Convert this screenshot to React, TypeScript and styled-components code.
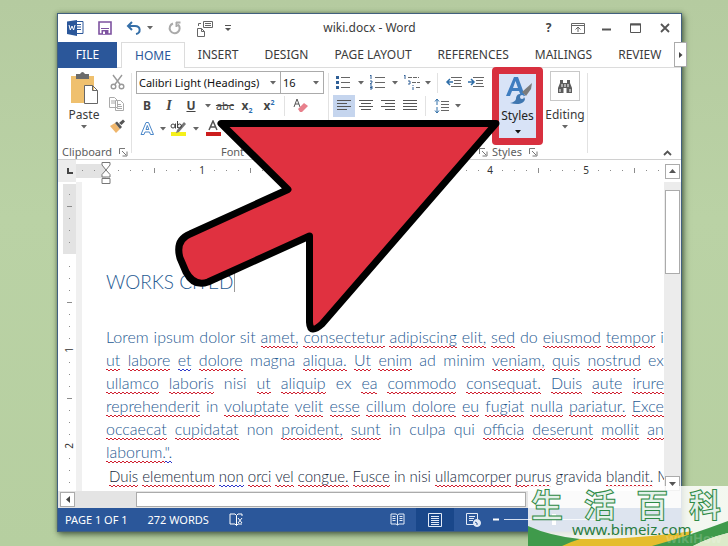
import React from 'react';
import styled, { createGlobalStyle, css } from 'styled-components';

const GlobalStyle = createGlobalStyle`
  *, *::before, *::after { box-sizing: border-box; }
  body { margin: 0; background: #b8d0a3; color: #3b3b3b; font: 12px/16px "Noto Sans", "Open Sans", sans-serif; }
  button, select, input { font: inherit; color: inherit; margin: 0; padding: 0; border: 0; background: none; }
  h1, p { margin: 0; font-weight: 400; }
`;

const Desktop = styled.div`
  position: relative;
  display: flex;
  height: 100vh;
  padding: 13px 46px 14px 57px;
  overflow: hidden;
  background: linear-gradient(#b5cba0, #bad2a5 40%, #b6cfa0);
`;

const Window = styled.main`
  flex: 1;
  min-width: 0;
  display: flex;
  flex-direction: column;
  background: #fff;
  border: 1px solid #41607f;
  box-shadow: 2px 3px 6px rgba(40, 60, 40, 0.6), 0 0 4px rgba(40, 60, 40, 0.5);
`;

const TitleBar = styled.header`
  display: grid;
  grid-template-columns: 1fr auto 1fr;
  align-items: center;
  height: 28px;
`;

const QuickAccess = styled.div`
  display: flex;
  align-items: center;
  gap: 8px;
  padding-left: 8px;
`;

const Title = styled.h1`
  font-size: 12px;
  line-height: 16px;
`;

const WindowControls = styled.div`
  display: flex;
  justify-content: flex-end;
  padding-right: 2px;
`;

const IconButton = styled.button<{ $w?: number; $on?: boolean }>`
  display: flex;
  align-items: center;
  justify-content: center;
  flex: none;
  width: ${p => p.$w ?? 22}px;
  height: 22px;
  background: ${p => (p.$on ? '#c5d5ee' : 'transparent')};
`;

const TabBar = styled.nav`
  display: flex;
  height: 26px;
  border-bottom: 1px solid #dcdcdc;
`;

const Tab = styled.button<{ $kind?: 'file' | 'active' }>`
  flex: none;
  height: 26px;
  padding: 0 13px;
  font-size: 12px;
  white-space: nowrap;
  ${p => p.$kind === 'file' && css`
    width: 59px;
    margin-right: 4px;
    padding: 0;
    color: #fff;
    background: #2b579a;
  `}
  ${p => p.$kind === 'active' && css`
    padding: 0 13px;
    color: #2b579a;
    background: #fff;
    border: 1px solid #dcdcdc;
    border-bottom: 0;
  `}
`;

const TabScroll = styled.button`
  display: flex;
  flex: none;
  align-items: center;
  justify-content: center;
  width: 13px;
  height: 25px;
  margin-left: auto;
  border: 1px solid #ababab;
  background: #fff;
`;

const Ribbon = styled.div`
  display: grid;
  grid-template-columns: 74px 197px 163px 50px 46px 1fr;
  height: 92px;
  border-bottom: 1px solid #d0d0d0;
`;

const Group = styled.section<{ $line?: boolean; $pad?: number }>`
  position: relative;
  display: flex;
  flex-direction: column;
  justify-content: space-between;
  min-width: 0;
  padding: 3px 0 0 ${p => p.$pad ?? 4}px;
  ${p => p.$line && css`
    background: linear-gradient(#e2e2e2, #e2e2e2) right 5px / 1px 80px no-repeat;
  `}
`;

const Row = styled.div`
  display: flex;
  align-items: center;
  height: 23px;
`;

const Divider = styled.span`
  flex: none;
  width: 1px;
  height: 20px;
  margin: 0 5px 0 4px;
  background: #e2e2e2;
`;

const GroupFooter = styled.div<{ $center?: boolean }>`
  display: flex;
  align-items: center;
  justify-content: ${p => (p.$center ? 'center' : 'space-between')};
  height: 14px;
  margin-bottom: 5px;
  font-size: 11px;
  color: #5c5c5c;
`;

const ClipboardBody = styled.div`
  display: grid;
  grid-template-columns: 44px 22px;
  height: 66px;
`;

const BigButton = styled.button`
  display: flex;
  flex-direction: column;
  align-items: center;
  gap: 2px;
  line-height: 16px;
`;

const SelectBox = styled.label<{ $w: number }>`
  display: flex;
  align-items: center;
  width: ${p => p.$w}px;
  height: 23px;
  padding-right: 4px;
  border: 1px solid #ababab;
  & + & { border-left: 0; }
  select {
    flex: 1;
    min-width: 0;
    height: 20px;
    padding-left: 2px;
    appearance: none;
    outline: none;
    font-size: 11px;
    color: #111;
  }
`;

const Letter = styled.span<{ $style?: 'b' | 'i' | 'u' | 's' }>`
  font-size: 12px;
  font-weight: 700;
  color: #444;
  ${p => p.$style === 'i' && css`font-family: "Liberation Serif", serif; font-style: italic; font-size: 14px;`}
  ${p => p.$style === 'u' && css`text-decoration: underline;`}
  ${p => p.$style === 's' && css`text-decoration: line-through; font-weight: 400; font-size: 11px;`}
  sub, sup { font-size: 7px; line-height: 0; color: #2b6cb0; }
`;

const HighlightFrame = styled.div`
  width: 51px;
  margin: -4px 0 0 0;
  border: 7px solid #d8303f;
  border-radius: 4px;
  background: #d8e3f7;
`;

const StylesButton = styled.button`
  display: flex;
  flex-direction: column;
  align-items: center;
  width: 37px;
  height: 64px;
  color: #222;
  white-space: nowrap;
`;

const BinocularBox = styled.span`
  display: flex;
  align-items: center;
  justify-content: center;
  width: 30px;
  height: 30px;
  margin-bottom: 4px;
  border: 1px solid #c8c8c8;
`;

const RibbonEnd = styled.div`
  display: flex;
  align-items: flex-end;
  justify-content: flex-end;
`;

const HRulerRow = styled.div`
  display: flex;
  align-items: center;
  height: 22px;
  overflow: hidden;
`;

const TabSelector = styled.button`
  flex: none;
  display: flex;
  align-items: center;
  justify-content: center;
  width: 18px;
  height: 22px;
  padding-left: 6px;
  background: #ececec;
`;

const HRuler = styled.div`
  flex: 1;
  display: flex;
  min-width: 0;
  height: 14px;
  overflow: hidden;
  background: linear-gradient(90deg, #e3e3e3 30px, #fff 30px);
`;

const Mark = styled.span`
  flex: none;
  display: flex;
  align-items: center;
  justify-content: center;
  width: 12px;
  height: 12px;
  font-size: 10px;
  line-height: 12px;
  color: #333;
`;

const Tick = styled.i<{ $long?: boolean; $vertical?: boolean }>`
  width: ${p => (p.$long && p.$vertical ? 5 : 1)}px;
  height: ${p => (p.$long && !p.$vertical ? 5 : 1)}px;
  background: #8c8c8c;
`;

const VNumber = styled.span`
  writing-mode: vertical-rl;
  transform: rotate(180deg);
`;

const IndentMarker = styled.svg`
  position: absolute;
  left: 101px;
  top: 161px;
`;

const Workspace = styled.div`
  flex: 1;
  display: flex;
  min-height: 0;
`;

const VRuler = styled.div`
  flex: none;
  width: 13px;
  margin: 2px 0 0 5px;
  padding-top: 4px;
  overflow: hidden;
  background: linear-gradient(#e3e3e3 70px, #fff 70px);
`;

const Gutter = styled.div`
  flex: none;
  width: 6px;
  background: #f0f0f0;
`;

const Page = styled.article`
  flex: 1;
  min-width: 0;
  padding: 89px 0 0 24px;
  overflow: hidden;
  font-family: Lato, sans-serif;
  color: #1f5a92;
`;

const Heading = styled.p`
  display: flex;
  align-items: center;
  height: 22px;
  margin-bottom: 32px;
  font-size: 19px;
  font-weight: 300;
  line-height: 22px;
  &::after { content: ''; width: 1px; height: 20px; margin-left: 1px; background: #999; }
`;

const TextLine = styled.p<{ $fill?: boolean; $dark?: boolean }>`
  height: 23px;
  font-size: 16px;
  font-weight: 300;
  line-height: 23px;
  overflow: hidden;
  white-space: nowrap;
  ${p => p.$fill && css`text-align: justify; text-align-last: justify;`}
  ${p => p.$dark && css`margin-top: 2px; padding-left: 3px; color: #14263a; font-size: 15px;`}
`;

const squiggle = (colour: string) =>
  `url("data:image/svg+xml,%3Csvg xmlns='http://www.w3.org/2000/svg' width='4' height='3'%3E%3Cpath d='M-1 3L1 1 3 3 5 1' fill='none' stroke='%23${colour}'/%3E%3C/svg%3E")`;

const Misspelt = styled.span<{ $blue?: boolean }>`
  padding-bottom: 2px;
  background: ${p => squiggle(p.$blue ? '3038c8' : 'd02030')} left bottom repeat-x;
`;

const VScroll = styled.div`
  flex: none;
  display: flex;
  flex-direction: column;
  width: 17px;
  padding: 0 1px;
  background: #ececec;
`;

const ScrollButton = styled.button`
  flex: none;
  display: flex;
  align-items: center;
  justify-content: center;
  width: 15px;
  height: 15px;
  border: 1px solid #ababab;
  background: #fff;
`;

const RulerEnd = styled.div`
  flex: none;
  width: 16px;
`;

const VThumb = styled.div`
  height: 84px;
  margin: 8px 0 auto;
  border: 1px solid #ababab;
  background: #fff;
`;

const HScroll = styled.div`
  display: flex;
  align-items: center;
  height: 17px;
  padding: 0 2px;
  background: #e4e4e4;
`;

const HThumb = styled.div`
  width: 63%;
  height: 15px;
  margin-left: 61px;
  border: 1px solid #ababab;
  background: #fff;
`;

const StatusBar = styled.footer`
  display: flex;
  align-items: center;
  height: 23px;
  padding-left: 7px;
  color: #fff;
  background: #2b579a;
  font-size: 11px;
  white-space: nowrap;
`;

const StatusItem = styled.span`
  margin-right: 20px;
`;

const ViewButton = styled.button<{ $on?: boolean }>`
  display: flex;
  align-items: center;
  justify-content: center;
  width: 38px;
  height: 23px;
  background: ${p => (p.$on ? '#19478a' : 'transparent')};
`;

const Views = styled.div`
  display: flex;
  align-items: center;
  margin-left: auto;
  padding-right: 77px;
`;

const Zoom = styled.input`
  appearance: none;
  width: 100px;
  height: 1px;
  margin-left: 4px;
  background: #d5dff0;
  &::-webkit-slider-thumb { appearance: none; width: 4px; height: 11px; background: #fff; }
`;

const Pointer = styled.svg`
  position: absolute;
  left: 170px;
  top: 115px;
  pointer-events: none;
`;

const Watermark = styled.aside`
  position: absolute;
  right: 0;
  bottom: 0;
  width: 200px;
  height: 60px;
  overflow: hidden;
  color: #2e8a45;
  background: rgba(255, 255, 255, 0.84);
`;

const WatermarkArt = styled.svg`
  position: absolute;
  left: 0;
  bottom: 0;
`;

const WatermarkName = styled.div`
  position: relative;
  display: flex;
  justify-content: space-between;
  padding: 0 7px 0 3px;
  height: 34px;
  font: 700 32px/34px "Noto Sans CJK SC", sans-serif;
  color: #e4f1ea;
  -webkit-text-stroke: 1px #2e8a45;
`;

const WatermarkLink = styled.a`
  position: relative;
  display: block;
  padding-left: 44px;
  font: 15px/18px "Noto Sans", sans-serif;
  color: #2a7d3f;
  text-decoration: none;
`;

const Signature = styled.span`
  position: absolute;
  right: 6px;
  bottom: 0;
  font: 700 13px/16px "Noto Sans", sans-serif;
  color: rgba(255, 255, 255, 0.2);
`;

const Caret = () => (
  <svg width="6" height="4" viewBox="0 0 6 4" aria-hidden="true"><path d="M0 0h6L3 3.5z" fill="#666" /></svg>
);

const CaretButton = ({ w = 12, label }: { w?: number; label: string }) => (
  <IconButton $w={w} aria-label={label}><Caret /></IconButton>
);

const Launcher = () => (
  <IconButton $w={17} aria-label="More options">
    <svg width="9" height="9" viewBox="0 0 9 9" fill="none" stroke="#777"><path d="M.5 6V.5H6M3 3l4 4M8 3.5V8H3.5" /></svg>
  </IconButton>
);

const Lines = ({ rows }: { rows: [number, number][] }) => (
  <svg width="16" height="14" viewBox="0 0 16 14" stroke="#555" aria-hidden="true">
    {rows.map(([a, b], i) => <path key={i} d={`M${a} ${1.5 + i * 3}H${b}`} />)}
  </svg>
);

const ListIcon = ({ kind }: { kind: 'dots' | 'numbers' | 'levels' }) => (
  <svg width="18" height="17" viewBox="0 0 18 17" aria-hidden="true">
    {kind === 'dots' && <><path d="M6 3.5h9M6 8.5h9M6 13.5h9" stroke="#666" /><path d="M1 2h3v3H1zM1 7h3v3H1zM1 12h3v3H1z" fill="#2f5f96" /></>}
    {kind === 'numbers' && <><path d="M6 3.5h10M6 8.5h10M6 13.5h10" stroke="#666" /><path d="M1 2l1-1v4M1 7h2v1.500L1 10h2M1 12h2v3H1M1 13.500h2" stroke="#2f5f96" fill="none" /></>}
    {kind === 'levels' && <><path d="M5 3.500h11M9 8.500h8M13 13.500h4" stroke="#666" strokeDasharray="4 1" /><path d="M1 2l1-1v4M5 7h2v3H5M10 11v1M10 13v3" stroke="#2f5f96" fill="none" /></>}
  </svg>
);

const IndentIcon = ({ out }: { out?: boolean }) => (
  <svg width="18" height="14" viewBox="0 0 18 14" fill="none" aria-hidden="true">
    <path d="M6 1.500h11M9 4.500h7M9 7.500h7M6 10.500h11" stroke="#666" />
    <path d={out ? 'M8 6H2M5 3L2 6l3 3' : 'M1 6h6M4 3l3 3-3 3'} stroke="#2f6ea8" strokeWidth="1.500" />
  </svg>
);

const spans = (text: string) => text.split(' ').map((word, i) => {
  const mark = word[0];
  const flagged = mark === '*' || mark === '+';
  return (
    <React.Fragment key={i}>
      {i > 0 && ' '}
      {flagged ? <Misspelt $blue={mark === '+'}>{word.slice(1)}</Misspelt> : word}
    </React.Fragment>
  );
});

const paragraph = [
  'Lorem ipsum dolor sit *amet, *consectetur *adipiscing *elit, *sed do *eiusmod *tempor i',
  '*ut *labore +et *dolore magna *aliqua. *Ut *enim ad minim *veniam, *quis *nostrud ex',
  '*ullamco *laboris nisi *ut *aliquip ex *ea *commodo *consequat. *Duis *aute *irure',
  '*reprehenderit in *voluptate *velit *esse *cillum *dolore *eu *fugiat *nulla *pariatur. *Exce',
  '*occaecat *cupidatat non *proident, *sunt in culpa qui *officia *deserunt *mollit *an',
];

const marks = (from: number, to: number, vertical?: boolean) =>
  Array.from({ length: to - from + 1 }, (_, i) => from + i).map(k => (
    <Mark key={k}>
      {k === 0 ? null : k % 8 === 0
        ? (vertical ? <VNumber>{k / 8}</VNumber> : k / 8)
        : <Tick $long={k % 4 === 0} $vertical={vertical} />}
    </Mark>
  ));

export default function App() {
  return (
    <Desktop>
      <GlobalStyle />
      <Window>
        <TitleBar>
          <QuickAccess>
            <svg width="20" height="18" viewBox="0 0 20 18" aria-label="Word">
              <path d="M10 2.500h7v12h-7" fill="#fff" stroke="#2b579a" /><path d="M11 5.500h4M11 8h4M11 10.500h4" stroke="#2b579a" />
              <path d="M1 2.500L11 1v16L1 15z" fill="#2b579a" /><path d="M3 6l1.300 5L6 7l1.600 4L9 6" stroke="#fff" fill="none" />
            </svg>
            <IconButton aria-label="Save">
              <svg width="14" height="14" viewBox="0 0 14 14"><path d="M1 1h12v12H1z" fill="#fff" stroke="#7d52a0" strokeWidth="1.600" /><path d="M3 7.500h8" stroke="#7d52a0" /><path d="M3.500 9h7v4h-7z" fill="#7d52a0" /><path d="M5 10.500h2V13H5z" fill="#fff" /></svg>
            </IconButton>
            <Row>
              <IconButton $w={20} aria-label="Undo">
                <svg width="16" height="14" viewBox="0 0 16 14" fill="none" stroke="#356fa8" strokeWidth="2"><path d="M6 1L2 5l4 4M2 5h7c6 0 6 7 1 8" /></svg>
              </IconButton>
              <CaretButton label="Undo history" />
            </Row>
            <IconButton aria-label="Redo">
              <svg width="14" height="14" viewBox="0 0 14 14" fill="none" stroke="#aaa" strokeWidth="2"><path d="M5 2.500a5 5 0 1 0 5 1M8 1.500h4.500M8.500 1v5" /></svg>
            </IconButton>
            <IconButton aria-label="Switch view">
              <svg width="18" height="17" viewBox="0 0 18 17" fill="none" stroke="#666"><path d="M1.500 8.500h4l3 3v5h-7zM5.500 8.500v3h3M7.500 1.500h9v6h-9zM9 3.500h6M9 5.500h6M2.500 6V3.500H5" /></svg>
            </IconButton>
            <IconButton $w={8} aria-label="Customize toolbar">
              <svg width="6" height="7" viewBox="0 0 6 7"><path d="M0 .5h6" stroke="#555" /><path d="M0 3h6L3 6z" fill="#555" /></svg>
            </IconButton>
          </QuickAccess>
          <Title>wiki.docx - Word</Title>
          <WindowControls>
            <IconButton $w={29} aria-label="Help"><Letter>?</Letter></IconButton>
            <IconButton $w={29} aria-label="Ribbon display"><svg width="14" height="11" viewBox="0 0 14 11" fill="none" stroke="#666"><path d="M.5.5h13v10H.5zM.5 2.500h13M7 9V4M4.500 6.500L7 4l2.500 2.500" /></svg></IconButton>
            <IconButton $w={29} aria-label="Minimize"><svg width="10" height="10" viewBox="0 0 10 10"><path d="M0 6.500h9" stroke="#555" strokeWidth="2" /></svg></IconButton>
            <IconButton $w={29} aria-label="Maximize"><svg width="11" height="10" viewBox="0 0 11 10" fill="none" stroke="#555"><path d="M.5 1h10v8.500H.5z" /><path d="M0 1.500h11" strokeWidth="2" /></svg></IconButton>
            <IconButton $w={29} aria-label="Close"><svg width="10" height="10" viewBox="0 0 10 10" stroke="#555" strokeWidth="1.800"><path d="M1 1l8 8M9 1L1 9" /></svg></IconButton>
          </WindowControls>
        </TitleBar>
        <TabBar>
          <Tab $kind="file">FILE</Tab>
          <Tab $kind="active">HOME</Tab>
          <Tab>INSERT</Tab>
          <Tab>DESIGN</Tab>
          <Tab>PAGE LAYOUT</Tab>
          <Tab>REFERENCES</Tab>
          <Tab>MAILINGS</Tab>
          <Tab>REVIEW</Tab>
          <TabScroll aria-label="More tabs"><svg width="4" height="6" viewBox="0 0 4 6"><path d="M0 0l3.500 3L0 6z" fill="#444" /></svg></TabScroll>
        </TabBar>
        <Ribbon>
          <Group $line>
            <ClipboardBody>
              <BigButton>
                <svg width="30" height="34" viewBox="0 0 30 34" aria-hidden="true">
                  <path d="M2 5h23v27H2z" fill="#efc06e" /><path d="M7 3h4q2.500-4 5 0h4v5H7z" fill="#6b6b6b" />
                  <path d="M15.500 14.500h8l5 5v13h-13zM23.500 14.500v5h5" fill="#fff" stroke="#666" />
                </svg>
                Paste
                <Caret />
              </BigButton>
              <div>
                <IconButton aria-label="Cut"><svg width="15" height="16" viewBox="0 0 15 16" fill="none" stroke="#999" strokeWidth="1.400"><path d="M3 1l7.500 10M12 1L4.500 11" /><circle cx="3.500" cy="12.500" r="2.300" /><circle cx="11.500" cy="12.500" r="2.300" /></svg></IconButton>
                <IconButton aria-label="Copy"><svg width="16" height="14" viewBox="0 0 16 14" fill="#fff" stroke="#aaa"><path d="M.5.500h5l3 3v7h-8zM2 4h4M2 6h4M6.500 3.500h5l3 3v7h-8zM8 7.500h4M8 9.500h5M8 11.500h5" /></svg></IconButton>
                <IconButton aria-label="Format painter"><svg width="17" height="14" viewBox="0 0 17 14"><path d="M1 7l5-3 5 6-4 4z" fill="#efb66c" /><path d="M6 4l2-1.500 5 5.500-2 2z" fill="#555" /><path d="M10 4l4-3.500 2 2L12.500 6z" fill="#555" /></svg></IconButton>
              </div>
            </ClipboardBody>
            <GroupFooter>Clipboard<Launcher /></GroupFooter>
          </Group>
          <Group $line>
            <div>
              <Row>
                <SelectBox $w={145}><select aria-label="Font"><option>Calibri Light (Headings)</option></select><Caret /></SelectBox>
                <SelectBox $w={43}><select aria-label="Font size"><option>16</option></select><Caret /></SelectBox>
              </Row>
              <Row>
                <IconButton><Letter>B</Letter></IconButton>
                <IconButton><Letter $style="i">I</Letter></IconButton>
                <IconButton><Letter $style="u">U</Letter></IconButton>
                <CaretButton label="Underline style" />
                <IconButton><Letter $style="s">abc</Letter></IconButton>
                <IconButton><Letter>x<sub>2</sub></Letter></IconButton>
                <IconButton><Letter>x<sup>2</sup></Letter></IconButton>
                <Divider />
                <IconButton aria-label="Clear formatting"><svg width="16" height="16" viewBox="0 0 16 16"><path d="M1 9L4 1l3 8M2 6h4" stroke="#555" fill="none" /><path d="M5 11l6-6 4 3-6 6H7z" fill="#e8808c" /></svg></IconButton>
              </Row>
              <Row>
                <IconButton aria-label="Text effects"><svg width="15" height="15" viewBox="0 0 15 15"><path d="M1 13.500L6 1.500h2.500l5 12h-3L9.500 11h-4.500l-1 2.500zM6 8.500h2.800L7.300 4.500z" fill="#fff" stroke="#4a86c8" /></svg></IconButton>
                <CaretButton w={10} label="Text effects options" />
                <IconButton aria-label="Highlight color"><svg width="18" height="17" viewBox="0 0 18 17"><path d="M1 12h15v4H1z" fill="#f5f01a" /><path d="M7 10l7-8 2 2-7 8-3 1z" fill="#777" /><circle cx="3" cy="6" r="2" fill="none" stroke="#444" /><path d="M5.500 3.500v5M7.500 1v7" stroke="#444" /><circle cx="9.500" cy="6" r="2" fill="none" stroke="#444" /></svg></IconButton>
                <CaretButton label="Highlight options" />
                <IconButton aria-label="Font color"><svg width="16" height="17" viewBox="0 0 16 17"><path d="M4 10L8 1l4 9M5.500 7h5" stroke="#555" strokeWidth="1.500" fill="none" /><path d="M1 12h15v4H1z" fill="#cc1d1d" /></svg></IconButton>
              </Row>
            </div>
            <GroupFooter $center>Font</GroupFooter>
          </Group>
          <Group>
            <div>
              <Row>
                <IconButton aria-label="Bullets"><ListIcon kind="dots" /></IconButton>
                <CaretButton label="Bullet styles" />
                <IconButton aria-label="Numbering"><ListIcon kind="numbers" /></IconButton>
                <CaretButton label="Number styles" />
                <IconButton aria-label="Multilevel list"><ListIcon kind="levels" /></IconButton>
                <CaretButton w={10} label="Multilevel styles" />
                <Divider />
                <IconButton aria-label="Decrease indent"><IndentIcon out /></IconButton>
                <IconButton aria-label="Increase indent"><IndentIcon /></IconButton>
              </Row>
              <Row>
                <IconButton $on aria-label="Align left"><Lines rows={[[1, 15], [1, 11], [1, 15], [1, 11]]} /></IconButton>
                <IconButton aria-label="Center"><Lines rows={[[1, 15], [3, 13], [1, 15], [3, 13]]} /></IconButton>
                <IconButton aria-label="Align right"><Lines rows={[[1, 15], [5, 15], [1, 15], [5, 15]]} /></IconButton>
                <IconButton aria-label="Justify"><Lines rows={[[1, 15], [1, 15], [1, 15], [1, 15]]} /></IconButton>
                <Divider />
                <IconButton aria-label="Line spacing"><svg width="16" height="16" viewBox="0 0 16 16" fill="none"><path d="M7 3.500h8M7 6.500h8M7 9.500h8M7 12.500h8" stroke="#666" /><path d="M3 1v6M1 3.500L3 1l2 2.500M3 9v6M1 12.500L3 15l2-2.500" stroke="#2f6ea8" /></svg></IconButton>
                <CaretButton w={10} label="Line spacing options" />
              </Row>
            </div>
            <GroupFooter><span /><Launcher /></GroupFooter>
          </Group>
          <Group $pad={0}>
            <HighlightFrame>
              <StylesButton>
                <svg width="30" height="34" viewBox="0 0 30 34" aria-hidden="true">
                  <path d="M3 22L11 3h4l7 19h-4l-2-5H9l-2 5zM10 14h5l-2.500-7z" fill="#3f7dc0" />
                  <path d="M29 9l-10 9 4 4 5-7z" fill="#7b7b7b" /><path d="M20 21c-5-3-7 1-7 4q-1 3-6 4c8 2 14 1 15-4z" fill="#3f76b0" /><circle cx="19" cy="23" r="2" fill="#d8e3f7" />
                </svg>
                Styles
                <svg width="6" height="12" viewBox="0 0 6 12" aria-hidden="true"><path d="M0 6h6L3 9.500z" fill="#111" /></svg>
              </StylesButton>
            </HighlightFrame>
            <GroupFooter>Styles<Launcher /></GroupFooter>
          </Group>
          <Group $line $pad={0}>
            <BigButton>
              <BinocularBox>
                <svg width="16" height="15" viewBox="0 0 16 15" aria-hidden="true"><path d="M3 1h3v3h4V1h3v3l2 5v5H9.500V9h-3v5H1V9l2-5z" fill="#5b5b5b" /><path d="M3 10v3M5 5v3M11 5v3M13 10v3M8 5v3" stroke="#fff" /></svg>
              </BinocularBox>
              Editing
              <Caret />
            </BigButton>
          </Group>
          <RibbonEnd>
            <IconButton $w={28} aria-label="Collapse ribbon"><svg width="9" height="6" viewBox="0 0 9 6" fill="none" stroke="#555" strokeWidth="1.800"><path d="M1 5l3.500-3.500L8 5" /></svg></IconButton>
          </RibbonEnd>
        </Ribbon>
        <HRulerRow>
          <TabSelector aria-label="Tab stop"><svg width="6" height="6" viewBox="0 0 6 6"><path d="M1 0v5h5" fill="none" stroke="#444" strokeWidth="2" /></svg></TabSelector>
          <HRuler>{marks(-2, 46)}</HRuler>
          <RulerEnd><ScrollButton aria-label="Scroll up"><svg width="7" height="4" viewBox="0 0 7 4"><path d="M0 4h7L3.500 0z" fill="#555" /></svg></ScrollButton></RulerEnd>
        </HRulerRow>
        <Workspace>
          <VRuler>{marks(-5, 19, true)}</VRuler>
          <Gutter />
          <Page>
            <Heading>WORKS CITED</Heading>
            {paragraph.map(line => <TextLine $fill key={line}>{spans(line)}</TextLine>)}
            <TextLine><Misspelt>laborum.</Misspelt><Misspelt $blue>".</Misspelt></TextLine>
            <TextLine $dark>{spans('*Duis *elementum +non *orci *vel *congue. *Fusce in nisi *ullamcorper *purus gravida *blandit. M')}</TextLine>
          </Page>
          <VScroll>
            <VThumb />
            <ScrollButton aria-label="Scroll down"><svg width="7" height="4" viewBox="0 0 7 4"><path d="M0 0h7L3.500 4z" fill="#555" /></svg></ScrollButton>
          </VScroll>
        </Workspace>
        <HScroll>
          <ScrollButton aria-label="Scroll left"><svg width="4" height="7" viewBox="0 0 4 7"><path d="M4 0v7L0 3.500z" fill="#444" /></svg></ScrollButton>
          <HThumb />
        </HScroll>
        <StatusBar>
          <StatusItem>PAGE 1 OF 1</StatusItem>
          <StatusItem>272 WORDS</StatusItem>
          <svg width="15" height="13" viewBox="0 0 15 13" fill="none" stroke="#fff" aria-label="Proofing"><path d="M7.500 2.500L6 1H1v10h5l1.500 1.500zM7.500 2.500L9 1h4v2M9 5l4 5M13 5l-4 5M7.500 12.500L9 11h4" /></svg>
          <Views>
            <ViewButton aria-label="Read mode"><svg width="15" height="13" viewBox="0 0 15 13" fill="none" stroke="#e3ebf7"><path d="M7.500 2L6 1H1v10h5l1.500 1L9 11h5V1H9zM7.500 2v10M2.500 3.500h3M2.500 5.500h3M2.500 7.500h3M9.500 3.500h3M9.500 5.500h3M9.500 7.500h3" /></svg></ViewButton>
            <ViewButton $on aria-label="Print layout"><svg width="14" height="14" viewBox="0 0 14 14" fill="none" stroke="#e3ebf7"><path d="M.5.500h13v13H.5zM3 3.500h8M3 5.500h8M3 7.500h8M3 9.500h8M3 11.500h8" /></svg></ViewButton>
            <ViewButton aria-label="Web layout"><svg width="15" height="14" viewBox="0 0 15 14" fill="none" stroke="#e3ebf7"><path d="M8 11.500H.5v-11h11V6M3 3.500h6M3 5.500h5M3 7.500h4" /><circle cx="11" cy="10" r="3.500" fill="#e3ebf7" /><path d="M9 9l2 1v2" stroke="#2b579a" /></svg></ViewButton>
            <svg width="8" height="3" viewBox="0 0 8 3" aria-hidden="true"><path d="M1 1.500h6" stroke="#fff" strokeWidth="2" /></svg>
            <Zoom type="range" aria-label="Zoom" />
          </Views>
        </StatusBar>
      </Window>
      <IndentMarker width="10" height="24" viewBox="0 0 10 24" fill="#fff" stroke="#777" aria-hidden="true">
        <path d="M1 1.500h8v2.500L5 9 1 4zM5 9l4 4.500V16H1v-2.500zM1 17.500h8v5H1z" />
      </IndentMarker>
      <Pointer width="335" height="222" viewBox="170 115 335 222" aria-hidden="true">
        <path d="M221 123.500H496L322 324Q310 335 309.500 322V236L208 282Q194 287 186 272L180 258Q175 240 190 234L288 189.500Z" fill="#e03140" stroke="#000" strokeWidth="7" strokeLinejoin="round" />
      </Pointer>
      <Watermark>
        <WatermarkArt width="200" height="60" viewBox="0 0 200 60" aria-hidden="true">
          <path d="M30 60L50 53Q100 54 165 45L150 60z" fill="#e5bd2e" />
          <path d="M0 40Q22 50 52 53Q42 56 34 60H0z" fill="#3f9a4b" />
          <path d="M124 60Q160 50 200 35V47Q180 52 165 60z" fill="#3f9a4b" />
          <path d="M165 60Q180 52 200 47V60z" fill="#dcebc9" />
        </WatermarkArt>
        <WatermarkName><span>生</span><span>活</span><span>百</span><span>科</span></WatermarkName>
        <WatermarkLink href="#">www.bimeiz.com</WatermarkLink>
        <Signature>wikiHow</Signature>
      </Watermark>
    </Desktop>
  );
}
